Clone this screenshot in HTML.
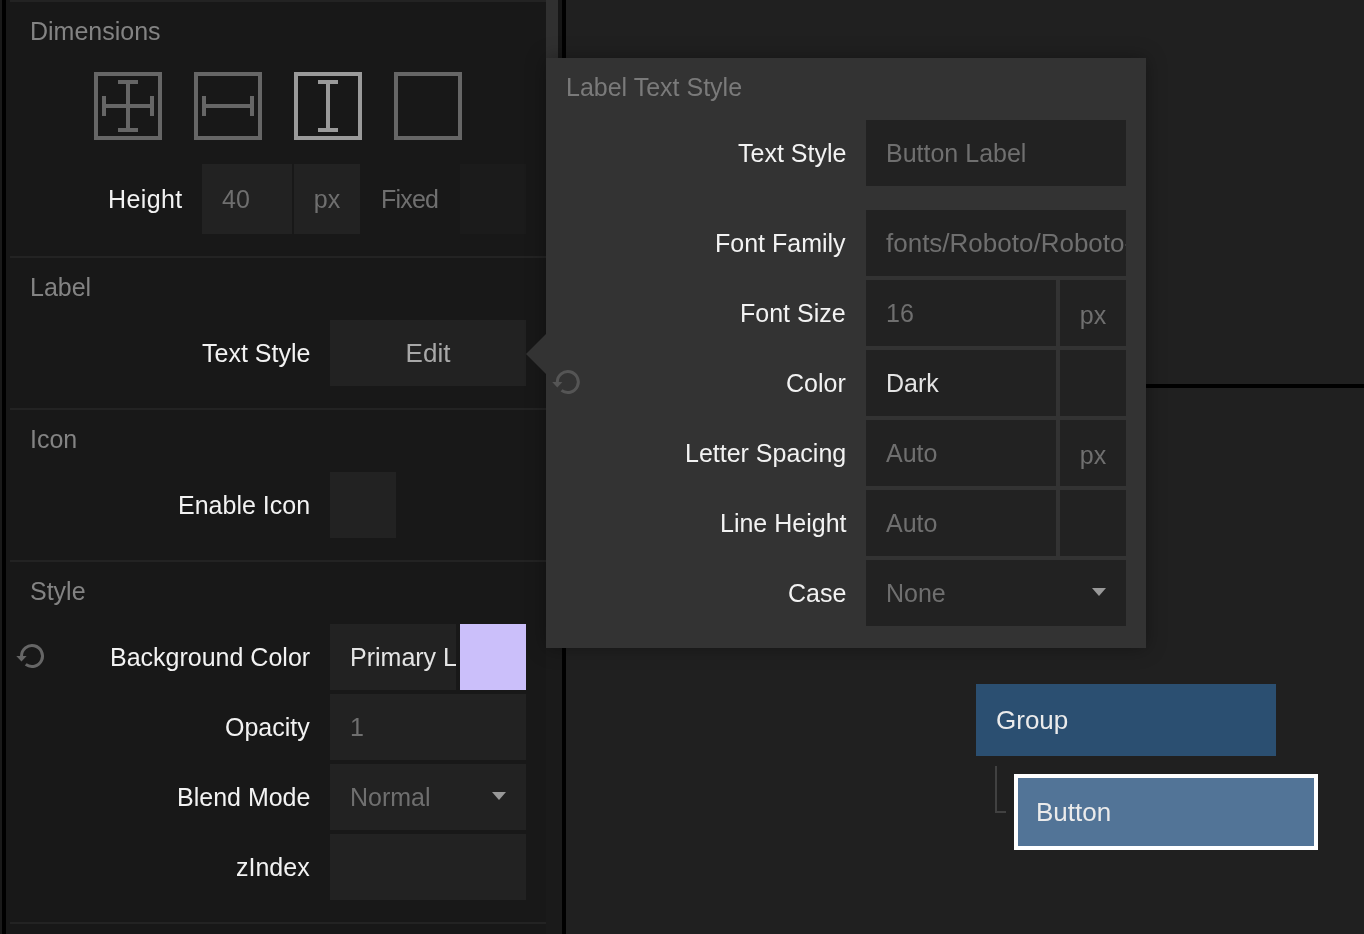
<!DOCTYPE html>
<html><head><meta charset="utf-8">
<style>
html,body{margin:0;padding:0;}
body{width:1364px;height:934px;overflow:hidden;position:relative;-webkit-font-smoothing:antialiased;background:#202020;font-family:"Liberation Sans",sans-serif;}
.a{position:absolute;}
.t{position:absolute;white-space:nowrap;font-size:25px;will-change:transform;}
.lbl{color:#f2f2f2;text-align:right;}
.hd{color:#838383;}
.fld{position:absolute;background:#222;overflow:hidden;}
.val{color:#6f6f6f;}
</style></head><body>
<!-- left strips -->
<div class="a" style="left:0;top:0;width:2px;height:934px;background:#1a1a1a"></div>
<div class="a" style="left:2px;top:0;width:4px;height:934px;background:#000"></div>
<!-- panel -->
<div class="a" style="left:6px;top:0;width:556px;height:934px;background:#181818"></div>
<div class="a" style="left:546px;top:0;width:12px;height:648px;background:#303030"></div>
<div class="a" style="left:558px;top:0;width:4px;height:934px;background:#161616"></div>
<div class="a" style="left:546px;top:648px;width:16px;height:286px;background:#1a1a1a"></div>
<div class="a" style="left:562px;top:0;width:4px;height:934px;background:#000"></div>

<!-- dividers -->
<div class="a" style="left:10px;top:0;width:536px;height:2px;background:#232323"></div>
<div class="a" style="left:10px;top:256px;width:536px;height:2px;background:#232323"></div>
<div class="a" style="left:10px;top:408px;width:536px;height:2px;background:#232323"></div>
<div class="a" style="left:10px;top:560px;width:536px;height:2px;background:#232323"></div>
<div class="a" style="left:10px;top:922px;width:536px;height:2px;background:#232323"></div>

<!-- Dimensions -->
<div class="t hd" style="left:30px;top:16px;line-height:30px">Dimensions</div>
<svg class="a" style="left:94px;top:72px" width="68" height="68" viewBox="0 0 68 68" fill="#666">
  <path d="M0 0H68V68H0ZM4 4V64H64V4Z" fill-rule="evenodd"/>
  <rect x="32" y="8" width="4" height="52"/><rect x="24" y="8" width="20" height="4"/><rect x="24" y="56" width="20" height="4"/>
  <rect x="8" y="32" width="52" height="4"/><rect x="8" y="24" width="4" height="20"/><rect x="56" y="24" width="4" height="20"/>
</svg>
<svg class="a" style="left:194px;top:72px" width="68" height="68" viewBox="0 0 68 68" fill="#666">
  <path d="M0 0H68V68H0ZM4 4V64H64V4Z" fill-rule="evenodd"/>
  <rect x="8" y="32" width="52" height="4"/><rect x="8" y="24" width="4" height="20"/><rect x="56" y="24" width="4" height="20"/>
</svg>
<svg class="a" style="left:294px;top:72px" width="68" height="68" viewBox="0 0 68 68" fill="#9a9a9a">
  <path d="M0 0H68V68H0ZM4 4V64H64V4Z" fill-rule="evenodd"/>
  <rect x="32" y="8" width="4" height="52"/><rect x="24" y="8" width="20" height="4"/><rect x="24" y="56" width="20" height="4"/>
</svg>
<svg class="a" style="left:394px;top:72px" width="68" height="68" viewBox="0 0 68 68" fill="#666">
  <path d="M0 0H68V68H0ZM4 4V64H64V4Z" fill-rule="evenodd"/>
</svg>

<div class="t lbl" style="right:1181px;top:164px;line-height:70px;letter-spacing:0.4px">Height</div>
<div class="fld" style="left:202px;top:164px;width:90px;height:70px"><div class="t val" style="left:20px;top:0;line-height:70px">40</div></div>
<div class="fld" style="left:294px;top:164px;width:66px;height:70px"><div class="t val" style="left:0;width:66px;text-align:center;top:0;line-height:70px">px</div></div>
<div class="t val" style="left:381px;top:164px;line-height:70px;letter-spacing:-0.8px">Fixed</div>
<div class="a" style="left:460px;top:164px;width:66px;height:70px;background:#1b1b1b"></div>

<!-- Label -->
<div class="t hd" style="left:30px;top:272px;line-height:30px">Label</div>
<div class="t lbl" style="right:1054px;top:320px;line-height:66px">Text Style</div>
<div class="fld" style="left:330px;top:320px;width:196px;height:66px"><div class="t" style="left:0;width:196px;text-align:center;top:0;line-height:66px;color:#a8a8a8;font-size:26px">Edit</div></div>

<!-- Icon -->
<div class="t hd" style="left:30px;top:424px;line-height:30px">Icon</div>
<div class="t lbl" style="right:1054px;top:472px;line-height:66px">Enable Icon</div>
<div class="fld" style="left:330px;top:472px;width:66px;height:66px"></div>

<!-- Style -->
<div class="t hd" style="left:30px;top:576px;line-height:30px">Style</div>
<svg class="a" style="left:14px;top:638px" width="36" height="36" viewBox="14 638 36 36">
  <path d="M21.5 656 A10.5 10.5 0 1 1 25.7 664.4" fill="none" stroke="#666" stroke-width="3"/>
  <path d="M16.3 656 H26.6 L21.5 661.5Z" fill="#666"/>
</svg>
<div class="t lbl" style="right:1054px;top:624px;line-height:66px">Background Color</div>
<div class="fld" style="left:330px;top:624px;width:126px;height:66px"><div class="t" style="left:20px;top:0;line-height:66px;color:#e4e4e4">Primary Light</div></div>
<div class="a" style="left:460px;top:624px;width:66px;height:66px;background:#cbbffa"></div>

<div class="t lbl" style="right:1054px;top:694px;line-height:66px">Opacity</div>
<div class="fld" style="left:330px;top:694px;width:196px;height:66px"><div class="t val" style="left:20px;top:0;line-height:66px">1</div></div>
<div class="t lbl" style="right:1054px;top:764px;line-height:66px">Blend Mode</div>
<div class="fld" style="left:330px;top:764px;width:196px;height:66px"><div class="t val" style="left:20px;top:0;line-height:66px">Normal</div>
  <svg class="a" style="left:162px;top:28px" width="14" height="8"><path d="M0 0H14L7 8Z" fill="#999"/></svg></div>
<div class="t lbl" style="right:1054px;top:834px;line-height:66px">zIndex</div>
<div class="fld" style="left:330px;top:834px;width:196px;height:66px"></div>

<!-- canvas right -->
<div class="a" style="left:1146px;top:384px;width:218px;height:4px;background:#000"></div>

<!-- Group nodes -->
<div class="a" style="left:976px;top:684px;width:300px;height:72px;background:#2b4f71"></div>
<div class="t" style="left:996px;top:684px;line-height:72px;color:#ebebeb;font-size:26px">Group</div>
<div class="a" style="left:995px;top:766px;width:2px;height:47px;background:#414141"></div>
<div class="a" style="left:995px;top:811px;width:11px;height:2px;background:#414141"></div>
<div class="a" style="left:1014px;top:774px;width:296px;height:68px;background:#527497;border:4px solid #fff"></div>
<div class="t" style="left:1036px;top:778px;line-height:68px;color:#ebebeb;font-size:26px">Button</div>

<!-- popup -->
<div class="a" style="left:546px;top:58px;width:600px;height:590px;background:#333;box-shadow:0 0 18px rgba(0,0,0,0.35)"></div>
<svg class="a" style="left:526px;top:334px" width="20" height="40"><path d="M20 0V40L0 20Z" fill="#333"/></svg>
<div class="t hd" style="left:566px;top:72px;line-height:30px;color:#7a7a7a">Label Text Style</div>

<div class="t lbl" style="right:518px;top:120px;line-height:66px">Text Style</div>
<div class="fld" style="left:866px;top:120px;width:260px;height:66px"><div class="t val" style="left:20px;top:0;line-height:66px">Button Label</div></div>

<div class="t lbl" style="right:518px;top:210px;line-height:66px">Font Family</div>
<div class="fld" style="left:866px;top:210px;width:260px;height:66px"><div class="t val" style="left:20px;top:0;line-height:66px;font-size:26px">fonts/Roboto/Roboto-Regular.ttf</div></div>

<div class="t lbl" style="right:518px;top:280px;line-height:66px">Font Size</div>
<div class="fld" style="left:866px;top:280px;width:190px;height:66px"><div class="t val" style="left:20px;top:0;line-height:66px">16</div></div>
<div class="fld" style="left:1060px;top:280px;width:66px;height:66px"><div class="t val" style="left:0;width:66px;text-align:center;top:2px;line-height:66px">px</div></div>

<svg class="a" style="left:550px;top:364px" width="36" height="36" viewBox="550 364 36 36">
  <path d="M557.3 382 A10.5 10.5 0 1 1 561.5 390.4" fill="none" stroke="#555" stroke-width="3"/>
  <path d="M552.2 382 H562.4 L557.3 387.5Z" fill="#555"/>
</svg>
<div class="t lbl" style="right:518px;top:350px;line-height:66px">Color</div>
<div class="fld" style="left:866px;top:350px;width:190px;height:66px"><div class="t" style="left:20px;top:0;line-height:66px;color:#e4e4e4">Dark</div></div>
<div class="fld" style="left:1060px;top:350px;width:66px;height:66px"></div>

<div class="t lbl" style="right:518px;top:420px;line-height:66px">Letter Spacing</div>
<div class="fld" style="left:866px;top:420px;width:190px;height:66px"><div class="t val" style="left:20px;top:0;line-height:66px">Auto</div></div>
<div class="fld" style="left:1060px;top:420px;width:66px;height:66px"><div class="t val" style="left:0;width:66px;text-align:center;top:2px;line-height:66px">px</div></div>

<div class="t lbl" style="right:518px;top:490px;line-height:66px">Line Height</div>
<div class="fld" style="left:866px;top:490px;width:190px;height:66px"><div class="t val" style="left:20px;top:0;line-height:66px">Auto</div></div>
<div class="fld" style="left:1060px;top:490px;width:66px;height:66px"></div>

<div class="t lbl" style="right:518px;top:560px;line-height:66px">Case</div>
<div class="fld" style="left:866px;top:560px;width:260px;height:66px"><div class="t val" style="left:20px;top:0;line-height:66px">None</div>
  <svg class="a" style="left:226px;top:28px" width="14" height="8"><path d="M0 0H14L7 8Z" fill="#999"/></svg></div>
</body></html>
